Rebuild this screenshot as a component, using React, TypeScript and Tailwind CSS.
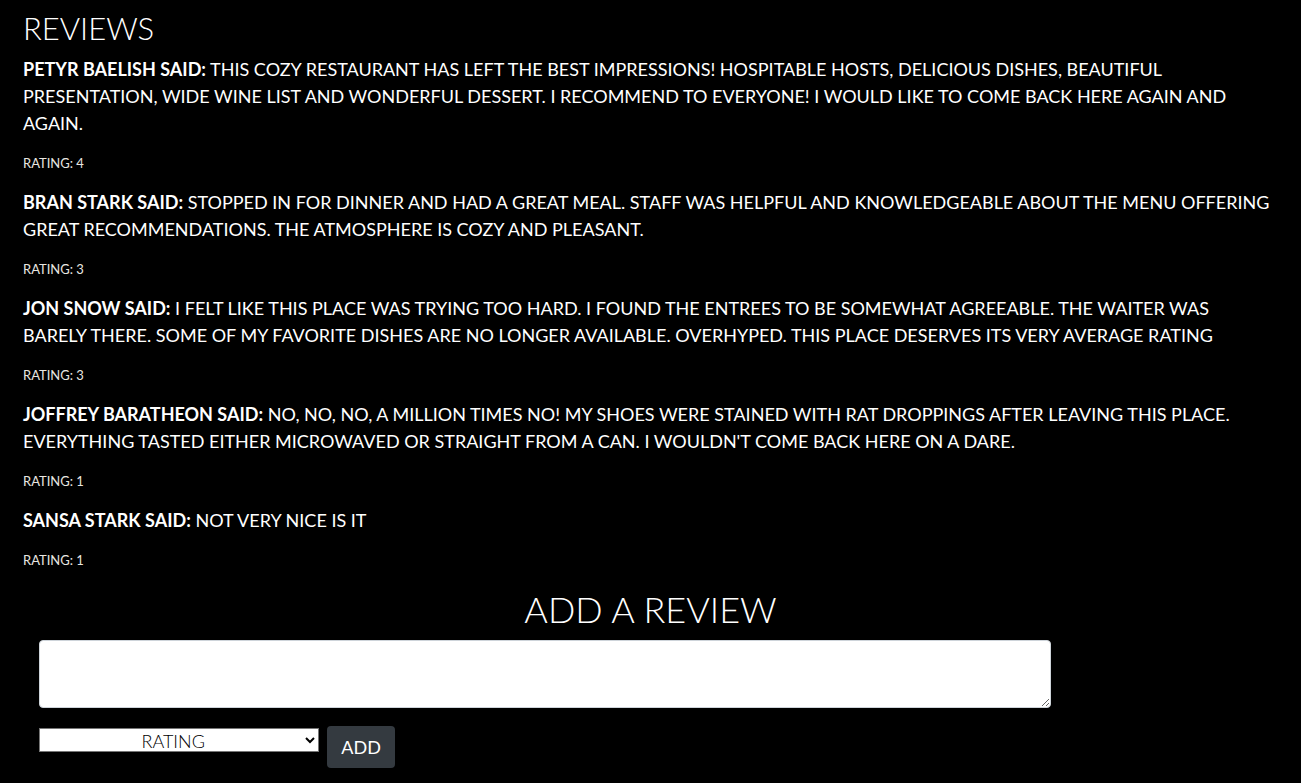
import { useState } from "react";

type Review = { author: string; text: string; rating: number };

const initialReviews: Review[] = [
  {
    author: "Petyr Baelish",
    text: "This cozy restaurant has left the best impressions! Hospitable hosts, delicious dishes, beautiful presentation, wide wine list and wonderful dessert. I recommend to everyone! I would like to come back here again and again.",
    rating: 4,
  },
  {
    author: "Bran Stark",
    text: "Stopped in for dinner and had a great meal. Staff was helpful and knowledgeable about the menu offering great recommendations. The atmosphere is cozy and pleasant.",
    rating: 3,
  },
  {
    author: "Jon Snow",
    text: "I felt like this place was trying too hard. I found the entrees to be somewhat agreeable. The waiter was barely there. Some of my favorite dishes are no longer available. Overhyped. This place deserves its very average rating",
    rating: 3,
  },
  {
    author: "Joffrey Baratheon",
    text: "No, no, no, a million times no! My shoes were stained with rat droppings after leaving this place. Everything tasted either microwaved or straight from a can. I wouldn't come back here on a dare.",
    rating: 1,
  },
  { author: "Sansa Stark", text: "Not very nice is it", rating: 1 },
];

function ReviewItem({ review }: { review: Review }) {
  return (
    <li>
      <p className="mb-[13px] text-[18px] leading-[27px]">
        <strong className="font-bold">{review.author} said:</strong> {review.text}
      </p>
      <p className="mb-[13px] text-[13px] leading-[26px] text-[#e8e6e0]">Rating: {review.rating}</p>
    </li>
  );
}

export default function App() {
  const [reviews, setReviews] = useState(initialReviews);
  const [text, setText] = useState("");
  const [rating, setRating] = useState("");

  return (
    <main className="min-h-screen bg-black px-[23px] pt-[9px] pb-[15px] font-['Lato',sans-serif] font-normal text-white uppercase">
      <h2 className="mb-[9px] text-[31px] leading-[38px] font-light">Reviews</h2>
      <ul className="pr-2">
        {reviews.map((review, i) => (
          <ReviewItem key={i} review={review} />
        ))}
      </ul>
      <h1 className="mb-2 text-center text-[36px] leading-[46px] font-light">Add a review</h1>
      <form
        className="pr-5 pl-4"
        onSubmit={(e) => {
          e.preventDefault();
          if (!text || !rating) return;
          setReviews([...reviews, { author: "Guest", text, rating: Number(rating) }]);
          setText("");
          setRating("");
        }}
      >
        <textarea
          aria-label="Your review"
          value={text}
          onChange={(e) => setText(e.target.value)}
          className="mb-[18px] block h-[68px] w-[83%] resize rounded border border-[#ced4da] bg-white px-3 py-1.5 text-[18px] text-[#495057]"
        />
        <div className="flex items-start gap-2">
          <select
            aria-label="Rating"
            value={rating}
            onChange={(e) => setRating(e.target.value)}
            className="mt-0.5 h-6 w-[23%] border border-[#767676] bg-white text-center text-[18px] leading-[22px] font-light text-black uppercase"
          >
            <option value="">Rating</option>
            {[1, 2, 3, 4, 5].map((n) => (
              <option key={n} value={n}>
                {n}
              </option>
            ))}
          </select>
          <button type="submit" className="h-[42px] rounded bg-[#343a40] px-[14px] text-[18px] uppercase">
            Add
          </button>
        </div>
      </form>
    </main>
  );
}
